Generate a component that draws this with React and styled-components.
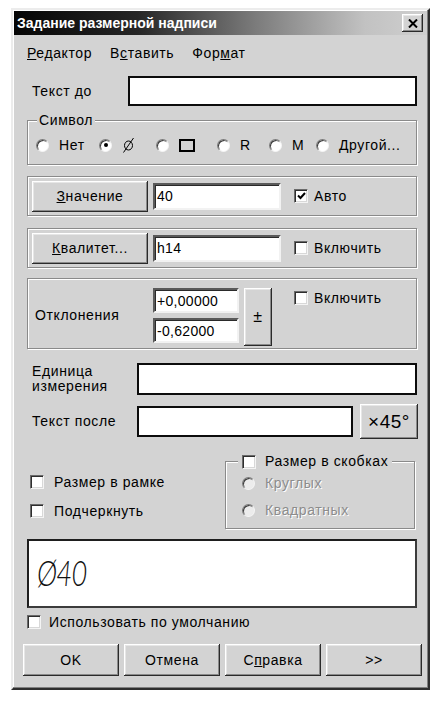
import React from 'react';
import styled, { createGlobalStyle } from 'styled-components';

const BG = '#d3d3d3';

const GlobalStyle = createGlobalStyle`
  html, body { margin: 0; padding: 0; background: #fff; }
  body { font-family: "Liberation Sans", Arial, sans-serif; font-size: 14px; letter-spacing: 0.6px; color: #000; }
  * { box-sizing: border-box; }
`;

const Page = styled.div`
  padding: 8px 0 0 11px;
`;

const Dialog = styled.div`
  width: 419px;
  height: 682px;
  background: ${BG};
  border: 2px solid;
  border-color: #ececec #2e2e2e #2e2e2e #ececec;
  box-shadow: inset -1px -1px 0 #808080, inset 1px 1px 0 #fff;
  padding: 1px;
  display: flex;
  flex-direction: column;
`;

const TitleBar = styled.div`
  height: 24px;
  display: flex;
  align-items: center;
  justify-content: space-between;
  padding: 0 4px 0 3px;
  background: linear-gradient(to right, #050505 0%, #262626 30%, #7a7a7a 58%, #c2c2c2 85%, #cfcfcf 100%);
`;

const TitleText = styled.span`
  color: #fff;
  font-weight: bold;
  font-size: 14px;
  letter-spacing: 0;
`;

const raised = `
  background: ${BG};
  box-shadow: inset -1px -1px 0 #2a2a2a, inset 1px 1px 0 #fff, inset -2px -2px 0 #8a8a8a, inset 2px 2px 0 #e6e6e6;
`;

const CloseButton = styled.div`
  width: 21px;
  height: 18px;
  ${raised}
  display: flex;
  align-items: center;
  justify-content: center;
`;

const Body = styled.div`
  display: flex;
  flex-direction: column;
  padding: 0 10px 0 13px;
`;

const MenuBar = styled.div`
  display: flex;
  gap: 18px;
  margin-top: 8px;
  height: 20px;
  align-items: center;
`;

const MenuItem = styled.span``;

const Row = styled.div`
  display: flex;
  align-items: ${p => p.$align || 'center'};
  margin-top: ${p => p.$mt}px;
  height: ${p => p.$h}px;
`;

const FieldLabel = styled.div`
  width: ${p => p.$w}px;
  padding-left: ${p => p.$pl || 0}px;
  line-height: 15px;
  flex-shrink: 0;
`;

const TextBox = styled.div`
  background: #fff;
  height: ${p => p.$h}px;
  width: ${p => (p.$w ? `${p.$w}px` : 'auto')};
  flex: ${p => (p.$w ? '0 0 auto' : '1 1 auto')};
  margin-left: ${p => p.$ml || 0}px;
  display: flex;
  align-items: center;
  padding-left: 2px;
  border: 2px solid;
  border-color: ${p => (p.$strong ? '#0c0c0c' : '#5a5a5a #f2f2f2 #f2f2f2 #5a5a5a')};
  box-shadow: ${p => (p.$strong ? 'none' : 'inset 1px 1px 0 #2a2a2a')};
  letter-spacing: 0.3px;
`;

const GroupBox = styled.div`
  position: relative;
  margin-top: ${p => p.$mt}px;
  width: ${p => (p.$w ? `${p.$w}px` : 'auto')};
  height: ${p => p.$h}px;
  border: 1px solid #8a8a8a;
  box-shadow: inset 1px 1px 0 #fff, 1px 1px 0 #fff;
`;

const Legend = styled.div`
  position: absolute;
  top: ${p => p.$top}px;
  left: ${p => p.$left}px;
  padding: 0 ${p => p.$px}px;
  background: ${BG};
  line-height: 15px;
  display: flex;
  align-items: center;
  gap: 9px;
`;

const RadioRow = styled.div`
  display: flex;
  align-items: center;
  height: 100%;
  padding: 5px 0 0 8px;
`;

const RadioItem = styled.div`
  display: flex;
  align-items: center;
  gap: 10px;
  width: ${p => (p.$w ? `${p.$w}px` : 'auto')};
  color: ${p => (p.$disabled ? '#8c8c8c' : '#000')};
  text-shadow: ${p => (p.$disabled ? '1px 1px 0 #fff' : 'none')};
`;

const RadioCircle = styled.span`
  width: 13px;
  height: 13px;
  border-radius: 50%;
  flex-shrink: 0;
  background: ${p => (p.$disabled ? '#ececec' : '#fff')};
  border: 1px solid;
  border-color: #7a7a7a #f4f4f4 #f4f4f4 #7a7a7a;
  box-shadow: inset 1px 1px 0 #3a3a3a;
  display: flex;
  align-items: center;
  justify-content: center;
  &::after {
    content: '';
    width: 4px;
    height: 4px;
    border-radius: 50%;
    background: ${p => (p.$checked ? '#000' : 'transparent')};
  }
`;

const SquareSymbol = styled.span`
  width: 16px;
  height: 13px;
  border: 2px solid #000;
`;

const Panel = styled.div`
  margin-top: ${p => p.$mt}px;
  height: ${p => p.$h}px;
  border: 1px solid #8a8a8a;
  box-shadow: inset 1px 1px 0 #fff, 1px 1px 0 #fff;
  display: flex;
  align-items: ${p => p.$align || 'center'};
  padding: ${p => p.$pt || 0}px 0 0 4px;
`;

const PushButton = styled.div`
  ${raised}
  width: ${p => p.$w}px;
  height: ${p => p.$h}px;
  margin-left: ${p => p.$ml || 0}px;
  flex-shrink: 0;
  display: flex;
  align-items: center;
  justify-content: center;
  font-size: ${p => p.$fs || 14}px;
  letter-spacing: ${p => (p.$fs ? '0.5px' : '0.6px')};
`;

const CheckItem = styled.div`
  display: flex;
  align-items: center;
  gap: ${p => p.$gap}px;
  margin-left: ${p => p.$ml || 0}px;
  margin-top: ${p => p.$mt || 0}px;
`;

const CheckBox = styled.span`
  width: 14px;
  height: 14px;
  flex-shrink: 0;
  background: #fff;
  border: 1px solid;
  border-color: #6a6a6a #f4f4f4 #f4f4f4 #6a6a6a;
  box-shadow: inset 1px 1px 0 #2e2e2e, inset -1px -1px 0 #d8d8d8;
  display: flex;
  align-items: center;
  justify-content: center;
`;

const LabelCol = styled.div`
  width: 116px;
  padding-left: 3px;
  margin-top: -6px;
  align-self: center;
  flex-shrink: 0;
`;

const InputStack = styled.div`
  display: flex;
  flex-direction: column;
  gap: 5px;
  margin-left: 5px;
`;

const OptionsArea = styled.div`
  display: flex;
  margin-top: 17px;
  height: 73px;
`;

const LeftOptions = styled.div`
  width: 198px;
  display: flex;
  flex-direction: column;
  gap: 13px;
  padding: 18px 0 0 3px;
`;

const RadioColumn = styled.div`
  display: flex;
  flex-direction: column;
  gap: 11px;
  padding: 13px 0 0 16px;
`;

const Preview = styled.div`
  margin-top: 10px;
  height: 69px;
  background: #fff;
  border: 2px solid;
  border-color: #1e1e1e #3c3c3c #3c3c3c #1e1e1e;
  display: flex;
  align-items: center;
  padding: 0 0 4px 8px;
`;

const PreviewText = styled.span`
  font-family: Lato, "Liberation Sans", sans-serif;
  font-style: italic;
  font-weight: 300;
  font-size: 35px;
  letter-spacing: -1px;
  color: #111;
  display: inline-block;
  transform: scaleX(0.78);
  transform-origin: left center;
`;

const ButtonRow = styled.div`
  display: grid;
  grid-template-columns: repeat(4, 96px);
  gap: 5px;
  margin: 14px -5px 0 -4px;
`;

const Check = ({ checked }) => (
  <CheckBox>
    {checked && (
      <svg width="9" height="8" viewBox="0 0 9 8">
        <path d="M1 3.5 L3.5 6 L8 1" fill="none" stroke="#000" strokeWidth="2" />
      </svg>
    )}
  </CheckBox>
);

const Diameter = () => (
  <svg width="13" height="16" viewBox="0 0 13 16">
    <ellipse cx="6.5" cy="8.5" rx="4" ry="4.5" fill="none" stroke="#000" strokeWidth="1" />
    <line x1="1.5" y1="15.5" x2="11.5" y2="1" stroke="#000" strokeWidth="1" />
  </svg>
);

export default function App() {
  return (
    <>
      <GlobalStyle />
      <Page>
        <Dialog>
          <TitleBar>
            <TitleText>Задание размерной надписи</TitleText>
            <CloseButton>
              <svg width="10" height="9" viewBox="0 0 10 9">
                <path d="M1 0.5 L9 8.5 M9 0.5 L1 8.5" stroke="#000" strokeWidth="2" />
              </svg>
            </CloseButton>
          </TitleBar>
          <Body>
            <MenuBar>
              <MenuItem><u>Р</u>едактор</MenuItem>
              <MenuItem>В<u>с</u>тавить</MenuItem>
              <MenuItem>Фор<u>м</u>ат</MenuItem>
            </MenuBar>

            <Row $mt={13} $h={30}>
              <FieldLabel $w={101} $pl={5}>Текст до</FieldLabel>
              <TextBox $strong $h={30} />
            </Row>

            <GroupBox $mt={14} $h={45}>
              <Legend $top={-8} $left={9} $px={2}>Символ</Legend>
              <RadioRow>
                <RadioItem $w={63}><RadioCircle />Нет</RadioItem>
                <RadioItem $w={57}><RadioCircle $checked /><Diameter /></RadioItem>
                <RadioItem $w={61}><RadioCircle /><SquareSymbol /></RadioItem>
                <RadioItem $w={52}><RadioCircle />R</RadioItem>
                <RadioItem $w={47}><RadioCircle />M</RadioItem>
                <RadioItem><RadioCircle />Другой...</RadioItem>
              </RadioRow>
            </GroupBox>

            <Panel $mt={11} $h={40}>
              <PushButton $w={116} $h={31}><span><u>З</u>начение</span></PushButton>
              <TextBox $w={128} $h={27} $ml={5}>40</TextBox>
              <CheckItem $gap={6} $ml={13}><Check checked />Авто</CheckItem>
            </Panel>

            <Panel $mt={12} $h={40}>
              <PushButton $w={116} $h={31}><span><u>К</u>валитет...</span></PushButton>
              <TextBox $w={128} $h={27} $ml={5}>h14</TextBox>
              <CheckItem $gap={6} $ml={13}><Check />Включить</CheckItem>
            </Panel>

            <Panel $mt={10} $h={71} $align="flex-start" $pt={9}>
              <LabelCol>Отклонения</LabelCol>
              <InputStack>
                <TextBox $w={86} $h={25}>+0,00000</TextBox>
                <TextBox $w={86} $h={25}>-0,62000</TextBox>
              </InputStack>
              <PushButton $w={28} $h={58} $ml={5} $fs={16}>±</PushButton>
              <CheckItem $gap={6} $ml={22} $mt={2}><Check />Включить</CheckItem>
            </Panel>

            <Row $mt={14} $h={32}>
              <FieldLabel $w={110} $pl={5}>Единица<br />измерения</FieldLabel>
              <TextBox $strong $h={32} />
            </Row>

            <Row $mt={9} $h={35}>
              <FieldLabel $w={110} $pl={5}>Текст после</FieldLabel>
              <TextBox $strong $w={216} $h={31} />
              <PushButton $w={58} $h={35} $ml={7} $fs={19}>×45°</PushButton>
            </Row>

            <OptionsArea>
              <LeftOptions>
                <CheckItem $gap={10}><Check />Размер в рамке</CheckItem>
                <CheckItem $gap={10}><Check />Подчеркнуть</CheckItem>
              </LeftOptions>
              <GroupBox $mt={5} $w={190} $h={68}>
                <Legend $top={-8} $left={12} $px={4}><Check />Размер в скобках</Legend>
                <RadioColumn>
                  <RadioItem $disabled><RadioCircle $disabled />Круглых</RadioItem>
                  <RadioItem $disabled><RadioCircle $disabled />Квадратных</RadioItem>
                </RadioColumn>
              </GroupBox>
            </OptionsArea>

            <Preview>
              <PreviewText>Ø40</PreviewText>
            </Preview>

            <CheckItem $gap={8} $mt={6}><Check />Использовать по умолчанию</CheckItem>

            <ButtonRow>
              <PushButton $h={32}>OK</PushButton>
              <PushButton $h={32}>Отмена</PushButton>
              <PushButton $h={32}><span>С<u>п</u>равка</span></PushButton>
              <PushButton $h={32}>&gt;&gt;</PushButton>
            </ButtonRow>
          </Body>
        </Dialog>
      </Page>
    </>
  );
}
